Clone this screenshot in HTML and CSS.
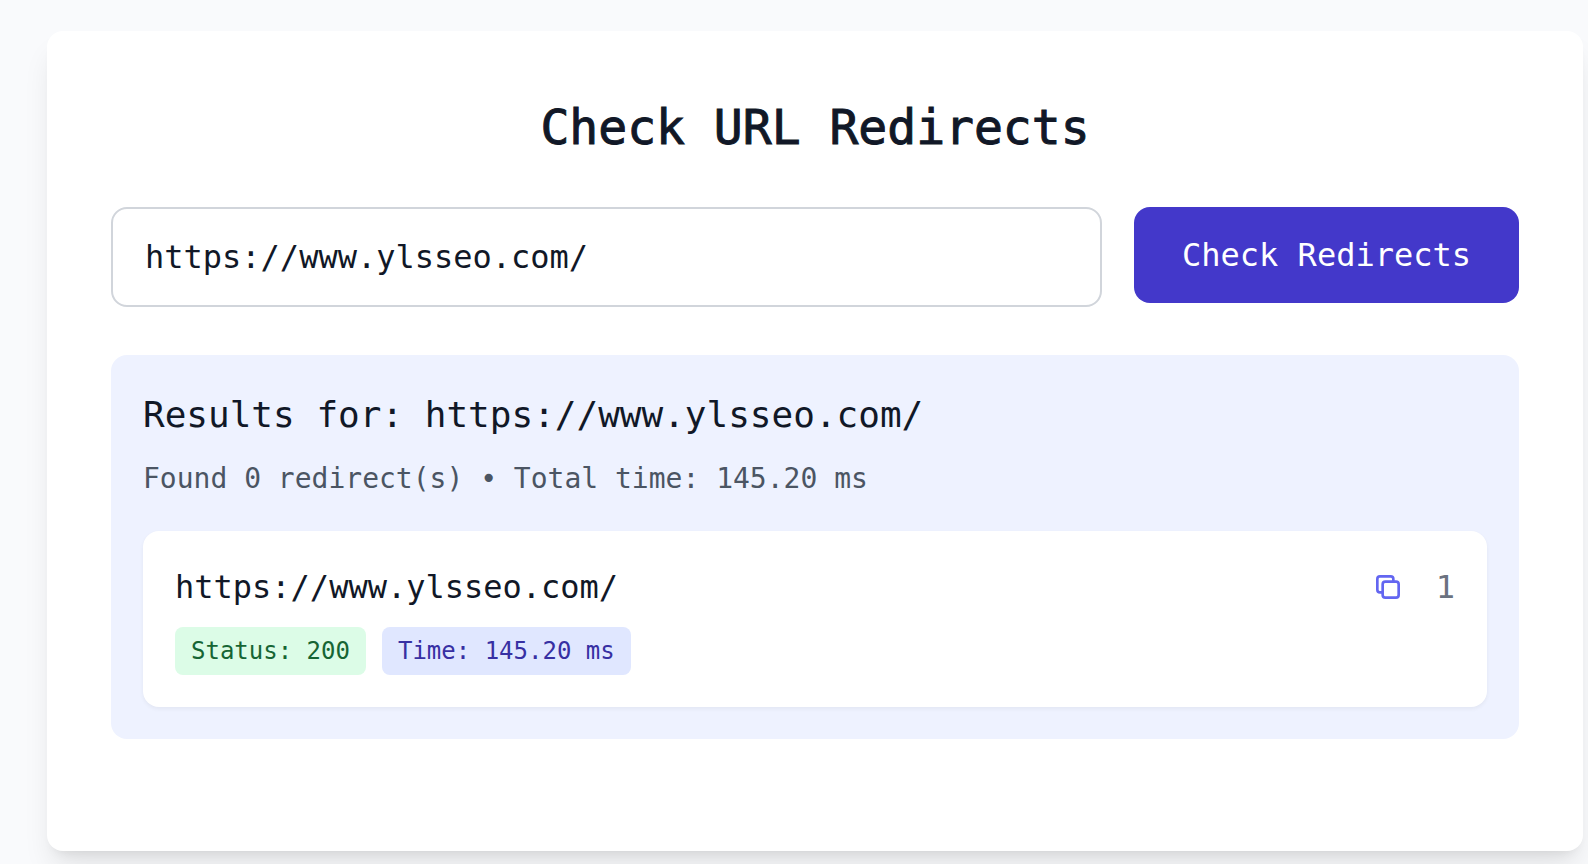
FILE: index.html
```html
<!DOCTYPE html>
<html lang="en">
<head>
  <meta charset="utf-8">
  <meta name="viewport" content="width=device-width, initial-scale=1">
  <title>Check URL Redirects</title>
  <link rel="stylesheet" href="styles.css">
</head>
<body>
  <main class="card">
    <h1 class="title">Check URL Redirects</h1>
    <form class="form" onsubmit="return false">
      <input class="url-input" type="text" aria-label="URL to check" value="https://www.ylsseo.com/" spellcheck="false">
      <button class="submit" type="submit">Check Redirects</button>
    </form>
    <section class="results">
      <h2 class="results-title">Results for: https://www.ylsseo.com/</h2>
      <p class="summary">Found 0 redirect(s) • Total time: 145.20 ms</p>
      <article class="hop">
        <div class="hop-head">
          <span class="hop-url">https://www.ylsseo.com/</span>
          <button class="copy" type="button" aria-label="Copy URL">
            <svg class="copy-icon" viewBox="0 0 24 24" fill="none" stroke="currentColor" stroke-width="2" stroke-linecap="round" stroke-linejoin="round" aria-hidden="true">
              <path d="M16 8V6a2 2 0 0 0-2-2H6a2 2 0 0 0-2 2v8a2 2 0 0 0 2 2h2m2 4h8a2 2 0 0 0 2-2v-8a2 2 0 0 0-2-2h-8a2 2 0 0 0-2 2v8a2 2 0 0 0 2 2z"/>
            </svg>
          </button>
          <span class="hop-index">1</span>
        </div>
        <div class="badges">
          <span class="badge badge-ok">Status: 200</span>
          <span class="badge badge-time">Time: 145.20 ms</span>
        </div>
      </article>
    </section>
  </main>
</body>
</html>
```
FILE: styles.css
```css
* {
  box-sizing: border-box;
  margin: 0;
}

body {
  padding: 31px 5px 13px 47px;
  background: #f9fafc;
  color: #111827;
  font-family: "DejaVu Sans Mono", "Liberation Mono", monospace;
  font-size: 32px;
  line-height: 48px;
}

button,
input {
  font: inherit;
}

.card {
  padding: 64px 64px 112px;
  border-radius: 16px;
  background: #fff;
  box-shadow: 0 20px 30px -6px rgb(0 0 0 / 10%), 0 8px 12px -8px rgb(0 0 0 / 10%);
}

.title {
  margin-bottom: 48px;
  font-size: 48px;
  font-weight: 400;
  line-height: 64px;
  text-align: center;
  -webkit-text-stroke: 1px currentColor;
}

.form {
  display: flex;
  align-items: flex-start;
  gap: 32px;
  margin-bottom: 48px;
}

.url-input {
  flex: 1;
  min-width: 0;
  height: 100px;
  padding: 24px 32px;
  border: 2px solid #d1d5db;
  border-radius: 16px;
  background: #fff;
  color: inherit;
}

.submit {
  padding: 24px 48px;
  border: 0;
  border-radius: 16px;
  background: #4338ca;
  color: #fff;
  white-space: nowrap;
}

.results {
  padding: 32px;
  border-radius: 16px;
  background: #eef2ff;
}

.results-title {
  margin-bottom: 16px;
  font-size: 36px;
  font-weight: 400;
  line-height: 56px;
}

.summary {
  margin-bottom: 32px;
  color: #4b5563;
  font-size: 28px;
  line-height: 40px;
}

.hop {
  padding: 32px;
  border-radius: 16px;
  background: #fff;
  box-shadow: 0 2px 4px rgb(0 0 0 / 5%);
}

.hop-head {
  display: flex;
  align-items: center;
  gap: 32px;
}

.hop-url {
  flex: 1;
  min-width: 0;
  overflow-wrap: anywhere;
}

.copy {
  display: flex;
  padding: 0;
  border: 0;
  background: none;
  color: #6366f1;
}

.copy-icon {
  width: 32px;
  height: 32px;
}

.hop-index {
  color: #6b7280;
}

.badges {
  display: flex;
  flex-wrap: wrap;
  gap: 16px;
  margin-top: 16px;
}

.badge {
  padding: 8px 16px;
  border-radius: 8px;
  font-size: 24px;
  line-height: 32px;
}

.badge-ok {
  background: #dcfce7;
  color: #166534;
}

.badge-time {
  background: #e0e7ff;
  color: #3730a3;
}
```
